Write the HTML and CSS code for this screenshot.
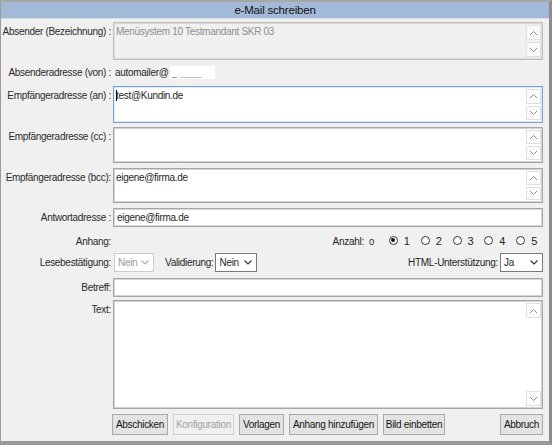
FILE: index.html
```html
<!DOCTYPE html>
<html lang="de">
<head>
<meta charset="utf-8">
<title>e-Mail schreiben</title>
<link rel="stylesheet" href="styles.css">
</head>
<body>
<div class="window">
  <div class="titlebar">e-Mail schreiben</div>
  <div class="form">
    <div class="row r-abs">
      <div class="label lt">Absender (Bezeichnung) :</div>
      <div class="ta ta-dis h38">
        <div class="ta-text grey">Menüsystem 10 Testmandant SKR 03</div>
        <div class="scroll"><div class="sb"><svg width="9" height="6" viewBox="0 0 9 6"><polyline points="1,5 4.5,1.5 8,5"/></svg></div><div class="sb"><svg width="9" height="6" viewBox="0 0 9 6"><polyline points="1,1 4.5,4.5 8,1"/></svg></div></div>
      </div>
    </div>
    <div class="row r-von">
      <div class="label">Absenderadresse (von) :</div>
      <div class="value">automailer@<span class="redact"><i></i><i class="w2"></i></span></div>
    </div>
    <div class="row r-an">
      <div class="label lt">Empfängeradresse (an) :</div>
      <div class="ta ta-focus h37">
        <div class="ta-text"><span class="caret"></span>test@Kundin.de</div>
        <div class="scroll"><div class="sb"><svg width="9" height="6" viewBox="0 0 9 6"><polyline points="1,5 4.5,1.5 8,5"/></svg></div><div class="sb"><svg width="9" height="6" viewBox="0 0 9 6"><polyline points="1,1 4.5,4.5 8,1"/></svg></div></div>
      </div>
    </div>
    <div class="row r-cc">
      <div class="label lt">Empfängeradresse (cc) :</div>
      <div class="ta h36">
        <div class="ta-text"></div>
        <div class="scroll"><div class="sb"><svg width="9" height="6" viewBox="0 0 9 6"><polyline points="1,5 4.5,1.5 8,5"/></svg></div><div class="sb"><svg width="9" height="6" viewBox="0 0 9 6"><polyline points="1,1 4.5,4.5 8,1"/></svg></div></div>
      </div>
    </div>
    <div class="row r-bcc">
      <div class="label lt">Empfängeradresse (bcc):</div>
      <div class="ta h35">
        <div class="ta-text">eigene@firma.de</div>
        <div class="scroll"><div class="sb"><svg width="9" height="6" viewBox="0 0 9 6"><polyline points="1,5 4.5,1.5 8,5"/></svg></div><div class="sb"><svg width="9" height="6" viewBox="0 0 9 6"><polyline points="1,1 4.5,4.5 8,1"/></svg></div></div>
      </div>
    </div>
    <div class="row r-antw">
      <div class="label">Antwortadresse :</div>
      <div class="inp">eigene@firma.de</div>
    </div>
    <div class="row r-anh">
      <div class="label">Anhang:</div>
      <div class="anh">
        <span class="anz">Anzahl:</span><span class="zero">0</span>
        <div class="radios">
          <span class="rad"><span class="dot on"></span>1</span>
          <span class="rad"><span class="dot"></span>2</span>
          <span class="rad"><span class="dot"></span>3</span>
          <span class="rad"><span class="dot"></span>4</span>
          <span class="rad"><span class="dot"></span>5</span>
        </div>
      </div>
    </div>
    <div class="row r-lese">
      <div class="label">Lesebestätigung:</div>
      <div class="opts">
        <div class="sel sel-dis w40"><span>Nein</span><svg width="8" height="5" viewBox="0 0 8 5"><polyline points="0.5,0.5 4,4 7.5,0.5"/></svg></div>
        <span class="vlab">Validierung:</span>
        <div class="sel w42"><span>Nein</span><svg width="8" height="5" viewBox="0 0 8 5"><polyline points="0.5,0.5 4,4 7.5,0.5"/></svg></div>
        <span class="hlab">HTML-Unterstützung:</span>
        <div class="sel w43"><span>Ja</span><svg width="8" height="5" viewBox="0 0 8 5"><polyline points="0.5,0.5 4,4 7.5,0.5"/></svg></div>
      </div>
    </div>
    <div class="row r-betr">
      <div class="label">Betreff:</div>
      <div class="inp"></div>
    </div>
    <div class="row r-text">
      <div class="label lt">Text:</div>
      <div class="ta h109">
        <div class="ta-text"></div>
        <div class="scroll tall"><div class="sb"><svg width="9" height="6" viewBox="0 0 9 6"><polyline points="1,5 4.5,1.5 8,5"/></svg></div><div class="sb"><svg width="9" height="6" viewBox="0 0 9 6"><polyline points="1,1 4.5,4.5 8,1"/></svg></div></div>
      </div>
    </div>
    <div class="buttons">
      <div class="btn b-send">Abschicken</div>
      <div class="btn btn-dis b-conf">Konfiguration</div>
      <div class="btn b-vorl">Vorlagen</div>
      <div class="btn b-anh">Anhang hinzufügen</div>
      <div class="btn b-bild">Bild einbetten</div>
      <div class="btn b-abb">Abbruch</div>
    </div>
  </div>
</div>
</body>
</html>
```
FILE: styles.css
```css
html, body {
  margin: 0;
  padding: 0;
  background: #f0f0f0;
}
.window {
  width: 552px;
  height: 445px;
  box-sizing: border-box;
  border-top: 2px solid #a8a8a8;
  border-left: 1px solid #9a9a9a;
  border-right: 3px solid #8c8c8c;
  border-bottom: 4px solid #9a9a9a;
  background: #f0f0f0;
  font-family: "Liberation Sans", Arial, sans-serif;
  font-size: 10px;
  letter-spacing: -0.3px;
  color: #262626;
  display: flex;
  flex-direction: column;
  overflow: hidden;
}
.titlebar {
  height: 16px;
  line-height: 16px;
  background: #a2bad8;
  border-bottom: 1px solid #d6dee9;
  text-align: center;
  font-size: 11.5px;
  letter-spacing: -0.2px;
  color: #111;
}
.form {
  display: flex;
  flex-direction: column;
  padding: 3px 6px 0 0;
}
.row {
  display: flex;
  align-items: center;
}
.label {
  width: 111px;
  flex: none;
  box-sizing: border-box;
  padding-right: 1px;
  text-align: right;
  white-space: nowrap;
  color: #2a2a2a;
}
.row .label.lt {
  align-self: flex-start;
  padding-top: 4px;
}
.ta {
  flex: 1;
  display: flex;
  box-sizing: border-box;
  background: #fff;
  border: 1px solid #a6a6a6;
  box-shadow: inset 0 0 0 1px #d2d2d2;
  margin-left: 1px;
}
.ta-dis {
  background: #f0f0f0;
  border-color: #bdbdbd;
  box-shadow: inset 0 0 0 1px #dcdcdc;
}
.ta-focus {
  border-color: #7ba2d2;
  box-shadow: inset 0 0 0 1px #dfe8f3;
}
.h38 { height: 38px; }
.h37 { height: 37px; }
.h36 { height: 36px; }
.h35 { height: 35px; }
.h109 { height: 109px; }
.ta-text {
  flex: 1;
  padding: 3px 0 0 2px;
  white-space: nowrap;
}
.grey { color: #8e8e8e; }
.caret {
  display: inline-block;
  width: 1px;
  height: 11px;
  background: #000;
  vertical-align: -2px;
  margin-right: -1px;
}
.scroll {
  width: 15px;
  flex: none;
  display: flex;
  flex-direction: column;
  gap: 2px;
  padding: 2px 1px 2px 0;
}
.scroll.tall {
  justify-content: space-between;
}
.sb {
  height: 15px;
  box-sizing: border-box;
  background: #fdfdfd;
  border: 1px solid #e0e0e0;
  display: flex;
  align-items: center;
  justify-content: center;
}
.ta-dis .sb {
  background: #f9f9f9;
}
.sb svg polyline {
  fill: none;
  stroke: #8a8a8a;
  stroke-width: 1;
}
.r-von {
  margin: 5px 0 7px;
  height: 14px;
}
.value {
  padding-left: 3px;
  display: flex;
  align-items: center;
}
.redact {
  display: inline-block;
  width: 45px;
  height: 13px;
  background: #fff;
  position: relative;
  margin-left: 1px;
}
.redact i {
  position: absolute;
  left: 2px;
  bottom: 1px;
  width: 5px;
  height: 1px;
  background: #9a9a9a;
}
.redact i.w2 {
  left: 10px;
  width: 22px;
  background: #c4c4c4;
}
.r-cc { margin-top: 4px; }
.r-bcc { margin-top: 5px; }
.r-antw { margin-top: 5px; }
.inp {
  flex: 1;
  height: 19px;
  box-sizing: border-box;
  background: #fff;
  border: 1px solid #a6a6a6;
  box-shadow: inset 0 0 0 1px #d6d6d6;
  margin-left: 1px;
  padding: 0 0 0 3px;
  line-height: 17px;
}
.r-anh {
  height: 24px;
  align-items: flex-end;
  padding-bottom: 4px;
  box-sizing: border-box;
}
.anh {
  flex: 1;
  display: flex;
  justify-content: flex-end;
  align-items: flex-end;
  padding-right: 6px;
}
.anz { margin-right: 5px; }
.zero { margin-right: 15px; font-size: 9.5px; }
.radios {
  display: flex;
  gap: 11px;
}
.rad {
  display: flex;
  align-items: center;
  gap: 6px;
  font-size: 11px;
}
.dot {
  width: 9px;
  height: 9px;
  box-sizing: border-box;
  border: 1px solid #333;
  border-radius: 50%;
  background: #fff;
  position: relative;
  top: -1px;
}
.dot.on::after {
  content: "";
  position: absolute;
  left: 1.5px;
  top: 1.5px;
  width: 4px;
  height: 4px;
  border-radius: 50%;
  background: #111;
}
.r-lese { margin-top: 2px; }
.opts {
  flex: 1;
  display: flex;
  align-items: center;
}
.sel {
  height: 19px;
  box-sizing: border-box;
  border: 1px solid #7a7a7a;
  background: #fff;
  display: flex;
  align-items: center;
  justify-content: space-between;
  padding: 0 4px 0 3px;
  margin-left: 2px;
}
.sel svg polyline {
  fill: none;
  stroke: #333;
  stroke-width: 1.2;
}
.sel-dis {
  border-color: #cccccc;
  color: #9a9a9a;
}
.sel-dis svg polyline { stroke: #b0b0b0; }
.w40 { width: 40px; }
.w42 { width: 42px; }
.w43 { width: 43px; }
.vlab { margin-left: 11px; }
.hlab { margin-left: auto; }
.r-betr { margin-top: 6px; }
.r-text { margin-top: 3px; }
.buttons {
  display: flex;
  gap: 5px;
  margin: 5px 0 0 111px;
}
.btn {
  height: 21px;
  box-sizing: border-box;
  border: 1px solid #a9a9a9;
  background: #e3e3e3;
  display: flex;
  align-items: center;
  justify-content: center;
  white-space: nowrap;
  color: #141414;
}
.btn-dis {
  border-color: #cfcfcf;
  background: #f0f0f0;
  color: #a3a3a3;
}
.b-send { width: 56px; }
.b-conf { width: 61px; }
.b-vorl { width: 45px; }
.b-anh { width: 89px; }
.b-bild { width: 62px; }
.b-abb { width: 43px; margin-left: auto; }
```
